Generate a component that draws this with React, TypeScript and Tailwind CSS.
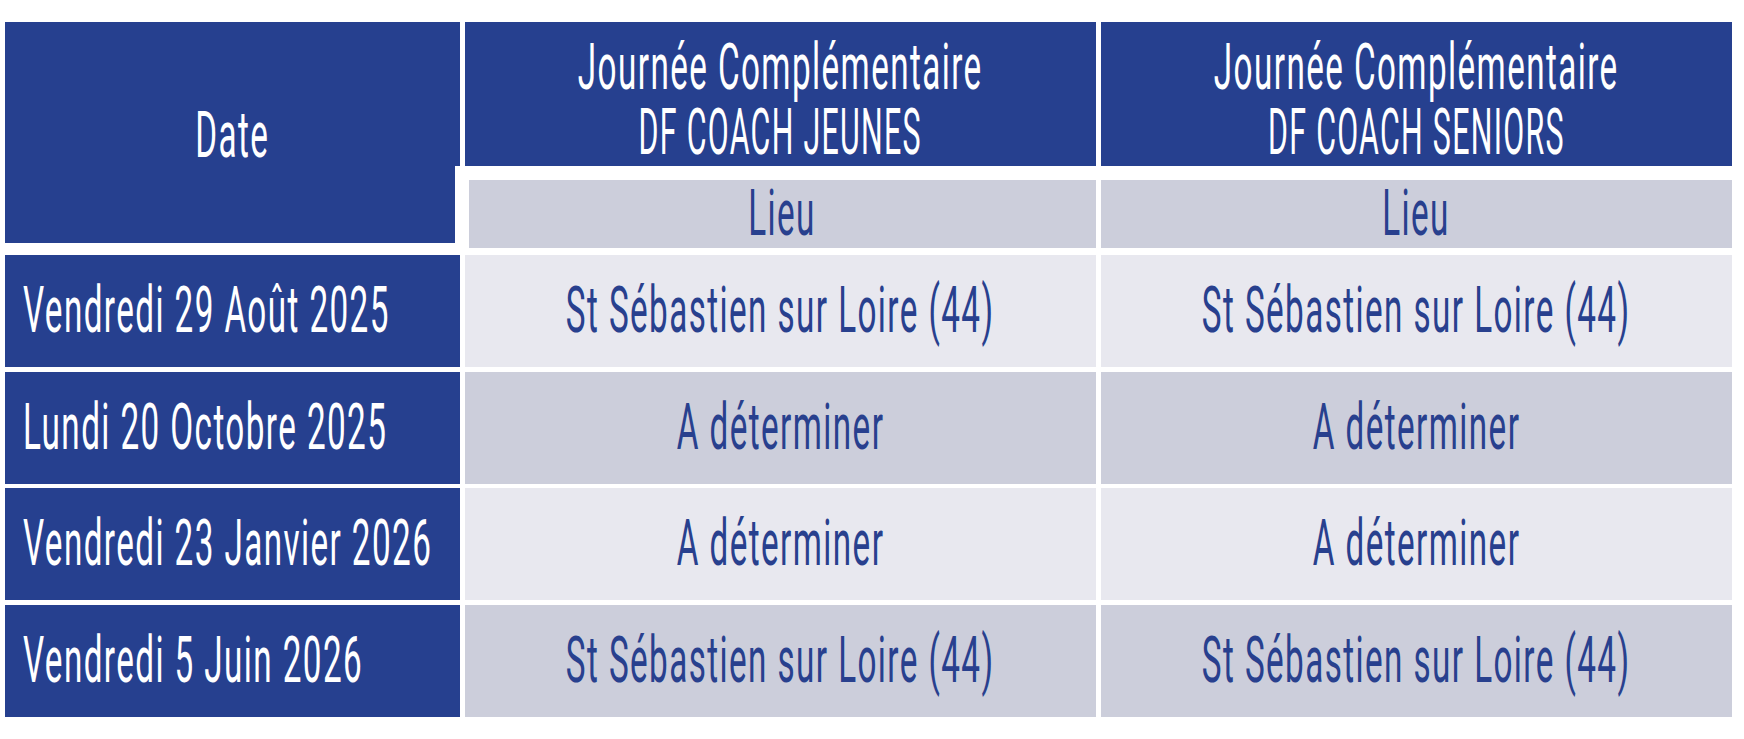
const BLUE = "bg-[#26408f]";

type Row = { date: string; jeunes: string; seniors: string; shade: "light" | "dark" };

const rows: Row[] = [
  { date: "Vendredi 29 Août 2025", jeunes: "St Sébastien sur Loire (44)", seniors: "St Sébastien sur Loire (44)", shade: "light" },
  { date: "Lundi 20 Octobre 2025", jeunes: "A déterminer", seniors: "A déterminer", shade: "dark" },
  { date: "Vendredi 23 Janvier 2026", jeunes: "A déterminer", seniors: "A déterminer", shade: "light" },
  { date: "Vendredi 5 Juin 2026", jeunes: "St Sébastien sur Loire (44)", seniors: "St Sébastien sur Loire (44)", shade: "dark" },
];

/*
 * Condensed type: no narrow face is installed, so Roboto is squeezed
 * horizontally around its own centre (or its left edge for the dates).
 * Capitals run a little narrower in the original, hence `caps`.
 */
function Narrow({
  children,
  left = false,
  caps = false,
}: {
  children: React.ReactNode;
  left?: boolean;
  caps?: boolean;
}) {
  return (
    <span
      className={`shrink-0 whitespace-nowrap tracking-[0.042em] ${caps ? "scale-x-[0.475]" : "scale-x-[0.52]"} ${
        left ? "origin-left" : "origin-center"
      }`}
    >
      {children}
    </span>
  );
}

function HeaderCell({ line1, line2 }: { line1: string; line2: string }) {
  return (
    <div className={`${BLUE} w-[631px] h-[144px] flex flex-col items-center justify-center pt-[13px] text-white`}>
      <div className="h-[70px] flex items-center justify-center">
        <Narrow>{line1}</Narrow>
      </div>
      <div className="h-[70px] flex items-center justify-center">
        <Narrow caps>{line2}</Narrow>
      </div>
    </div>
  );
}

function PlaceCell({ text, shade, width }: { text: string; shade: Row["shade"]; width: string }) {
  return (
    <div
      className={`${width} h-full flex items-center justify-center text-[#28408e] ${
        shade === "light" ? "bg-[#e8e8ef]" : "bg-[#cccedb]"
      }`}
    >
      <Narrow>{text}</Narrow>
    </div>
  );
}

export default function App() {
  return (
    <div
      className="w-[1744px] h-[739px] bg-white pl-[5px] pt-[22px] overflow-hidden text-[64px] leading-none font-normal"
      style={{ fontFamily: "Roboto, 'Liberation Sans', sans-serif" }}
    >
      {/* header: Date spans both header rows */}
      <div className="flex items-start gap-[5px]">
        <div className={`${BLUE} w-[455px] h-[221px] flex items-center justify-center text-white pt-[6px]`}>
          <Narrow>Date</Narrow>
        </div>
        <div className="flex flex-col">
          <div className="flex gap-[5px]">
            <HeaderCell line1="Journée Complémentaire" line2="DF COACH JEUNES" />
            <HeaderCell line1="Journée Complémentaire" line2="DF COACH SENIORS" />
          </div>
          <div className="relative -ml-[10px] bg-white pl-[14px] pt-[14px] pb-[5px]">
            <div className="flex gap-[5px] h-[68px]">
              <PlaceCell text="Lieu" shade="dark" width="w-[627px]" />
              <PlaceCell text="Lieu" shade="dark" width="w-[631px]" />
            </div>
          </div>
        </div>
      </div>

      {/* body rows */}
      <div className="mt-[2px] flex flex-col gap-[4.5px]">
        {rows.map((row) => (
          <div key={row.date} className="flex gap-[5px] h-[112px]">
            <div className={`${BLUE} w-[455px] h-full flex items-center pl-[18px] text-white`}>
              <Narrow left>{row.date}</Narrow>
            </div>
            <PlaceCell text={row.jeunes} shade={row.shade} width="w-[631px]" />
            <PlaceCell text={row.seniors} shade={row.shade} width="w-[631px]" />
          </div>
        ))}
      </div>
    </div>
  );
}
